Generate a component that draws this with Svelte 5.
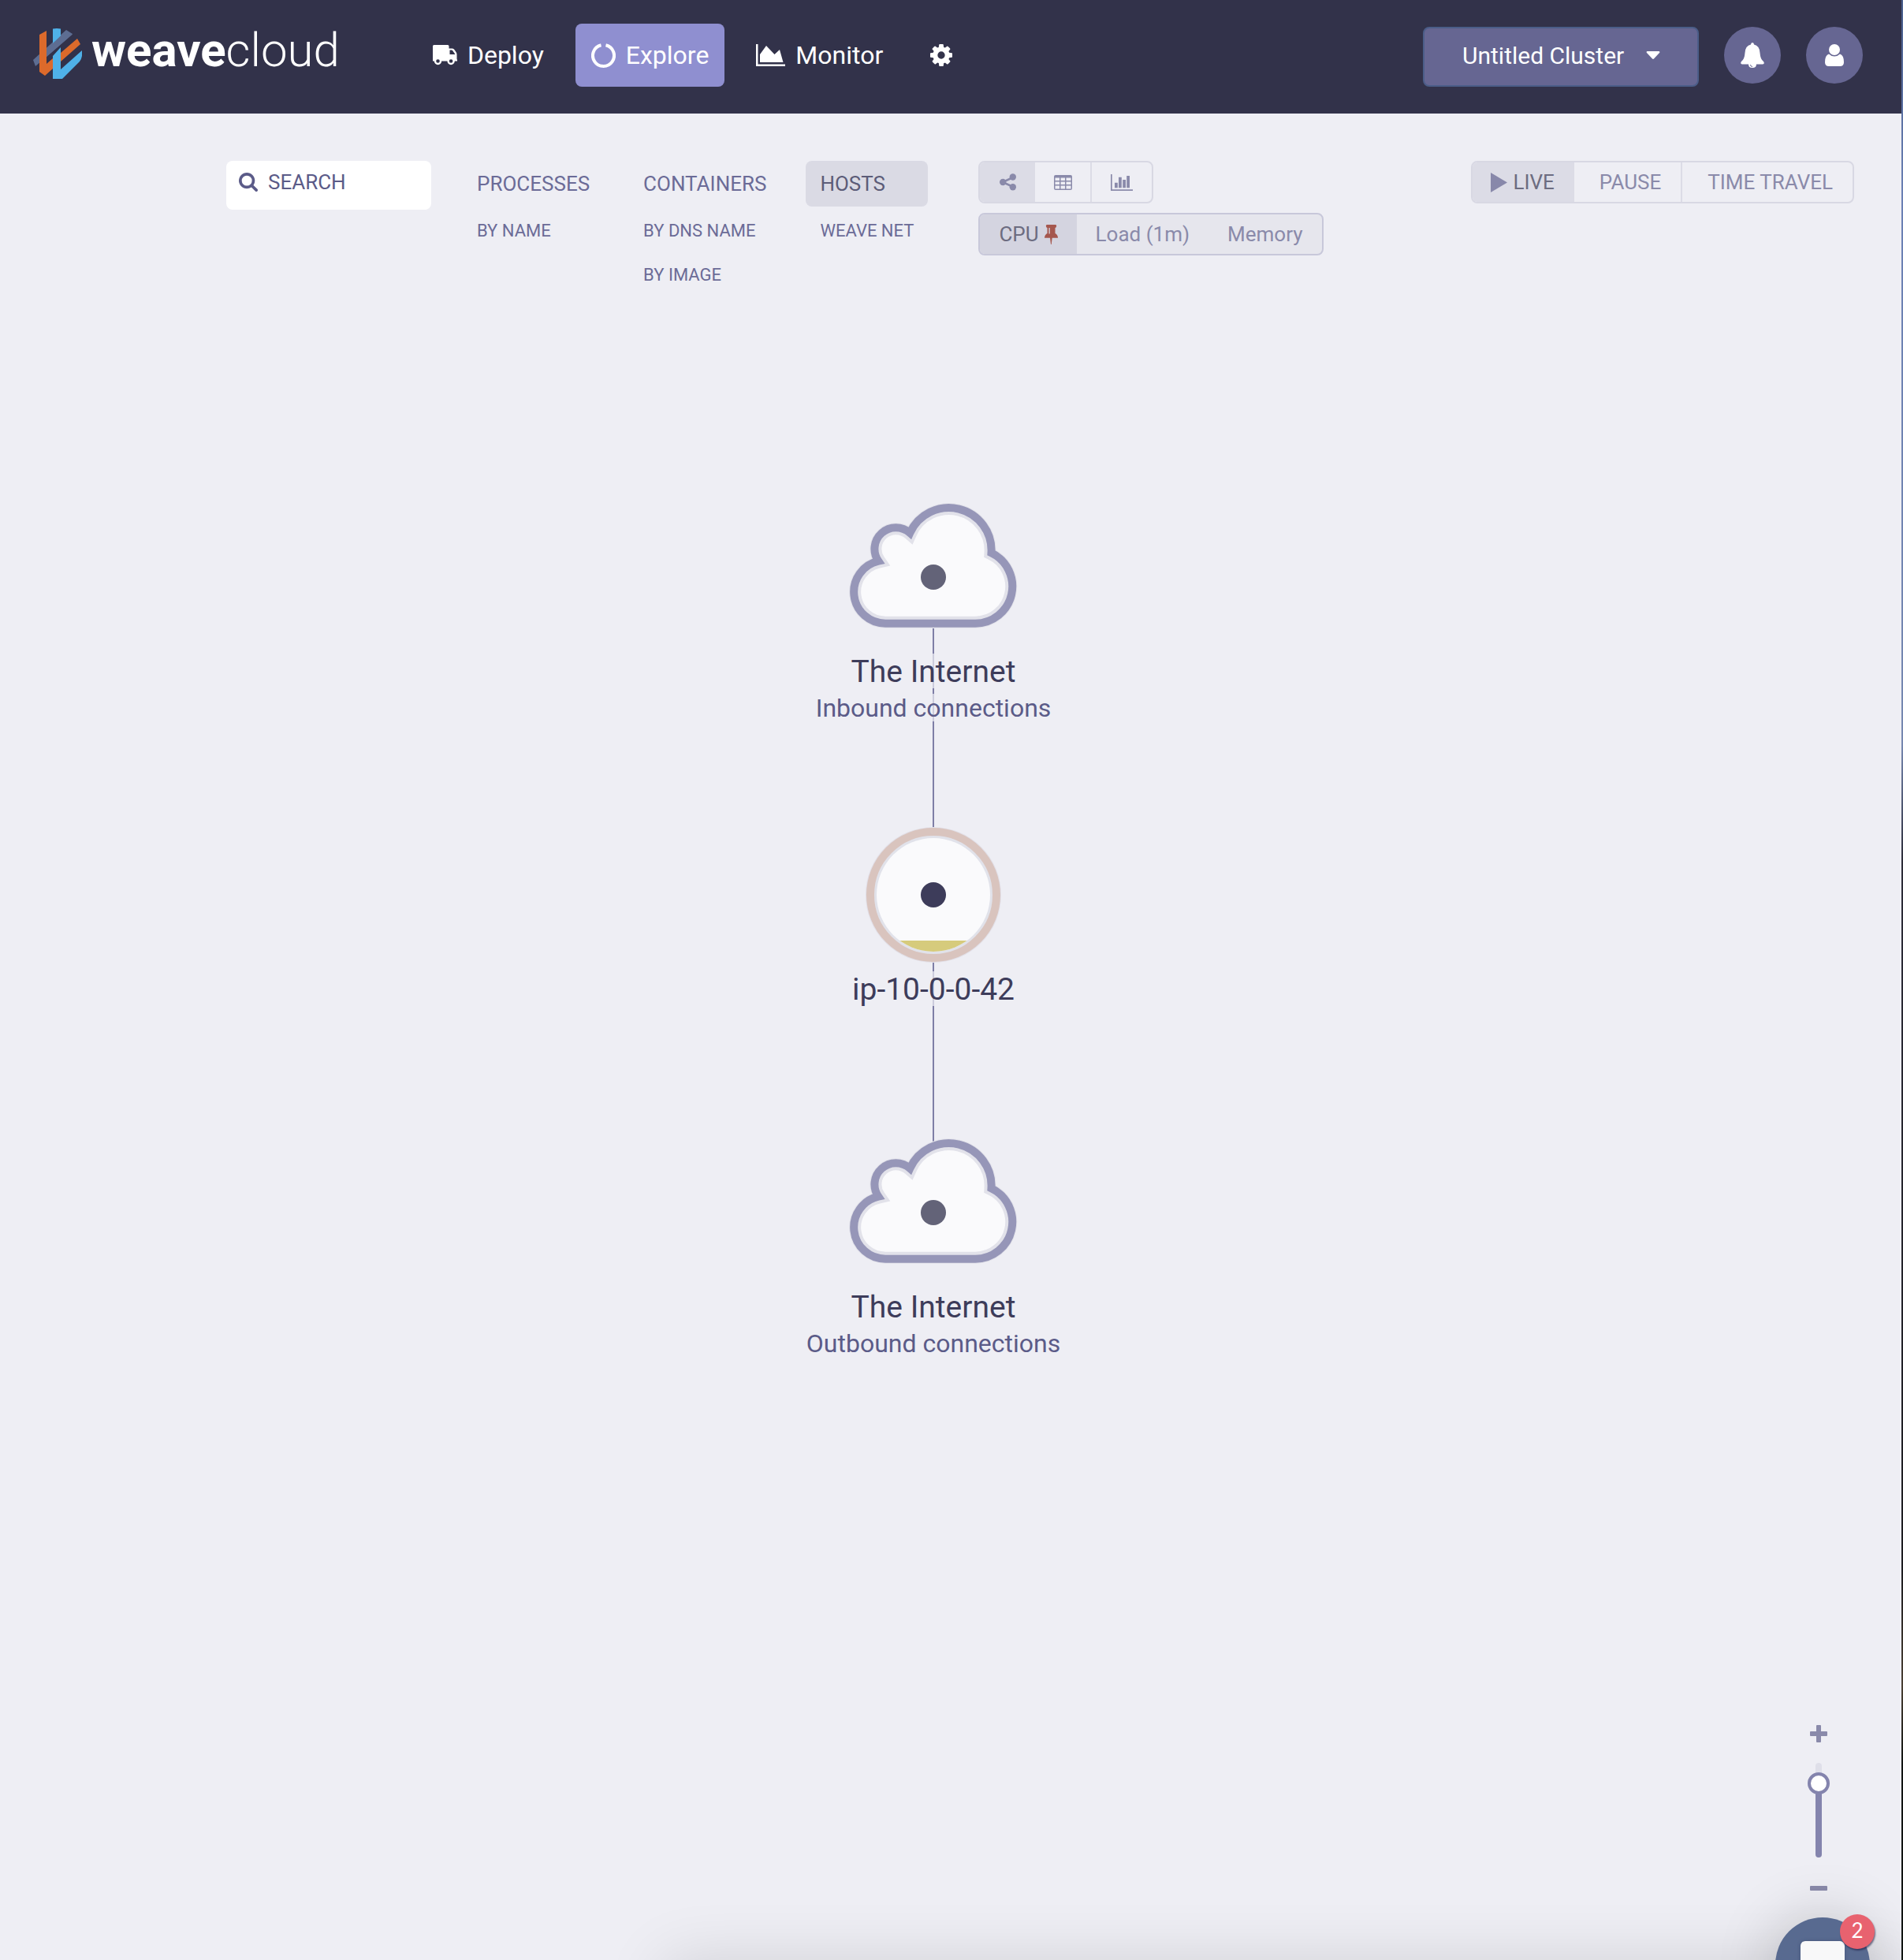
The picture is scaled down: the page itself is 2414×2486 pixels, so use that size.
<script>
  const navIcons = { deploy: 'Deploy', explore: 'Explore', monitor: 'Monitor' };
  let section = $state('explore');
  let topology = $state('Hosts');
  let view = $state('graph');
  let metric = $state('CPU');
  let timeMode = $state('live');
  let zoom = $state(87);

  const topologies = [
    { name: 'Processes', children: ['By name'] },
    { name: 'Containers', children: ['By DNS name', 'By image'] },
    { name: 'Hosts', children: ['Weave Net'] }
  ];
  const metrics = ['CPU', 'Load (1m)', 'Memory'];
  const cloud = 'M-60.700 58.700A40 40 0 0 1 -69.700 -20.300A27 27 0 0 1 -29.700 -56A54 54 0 0 1 73.500 -30.700A47 47 0 0 1 53.300 58.700Z';
</script>

<div class="app">
  <div class="page">
    <header>
      <a class="logo" href="#home" aria-label="weavecloud">
        <svg width="62" height="64" viewBox="42 36 62 64" aria-hidden="true">
          <path fill="#5d6d92" d="M84 38L92 43L45 84L42 76Z" />
          <path fill="#4fb1e8" d="M67 36.500Q72 35.500 77 36.500V46L67 55ZM67 71L77 60V88L104 64V71Q103 76 101 78L79 100H67Z" />
          <path fill="#5d6d92" d="M83.500 39L92 43.500L58 73L58 64Z" />
          <path fill="#dc6a2b" d="M50 44L59 39V81L67 74V87L57 96L50 91ZM77 67L98 49L102 56L77 78Z" />
        </svg>
        <span class="wordmark"><b>weave</b>cloud</span>
      </a>
      <nav aria-label="Main">
        {#each Object.entries(navIcons) as [id, label]}
          <a href={'#' + id} class:active={section === id} onclick={() => (section = id)}>
            {#if id === 'deploy'}
              <svg width="31" height="26" viewBox="0 0 31 26" aria-hidden="true">
                <path fill="currentColor" fill-rule="evenodd" d="M1.500 0H19Q20.500 0 20.500 1.500V4.500H24.500Q26 4.500 27 5.500L29.500 9Q30.500 10.500 30.500 12V18.500H31V20.500H27.800A4.700 4.700 0 1 1 18.400 20.500H11.200A4.700 4.700 0 1 1 1.800 20.500H0V1.500Q0 0 1.500 0ZM21.500 6.500V12H28.500L25 7Q24.500 6.500 24 6.500ZM6.500 18.200A2.300 2.300 0 1 0 6.500 22.800A2.300 2.300 0 1 0 6.500 18.200ZM23.100 18.200A2.300 2.300 0 1 0 23.100 22.800A2.300 2.300 0 1 0 23.100 18.200Z" />
              </svg>
            {:else if id === 'explore'}
              <svg width="31" height="31" viewBox="0 0 31 31" aria-hidden="true">
                <path fill="none" stroke="currentColor" stroke-width="4" d="M18.500 2.300A13.500 13.500 0 1 1 12.500 2.300" />
              </svg>
            {:else}
              <svg width="37" height="28" viewBox="0 0 37 28" aria-hidden="true">
                <path fill="currentColor" d="M0 0H2.500V25.500H37V28H0ZM5 23V13L13 2L23.500 13L30 7L34.500 23Z" />
              </svg>
            {/if}
            <span>{label}</span>
          </a>
        {/each}
        <a href="#settings" aria-label="Settings">
          <svg width="28" height="28" viewBox="128 128 1536 1536" aria-hidden="true">
            <path fill="currentColor" d="M1152 896q0-106-75-181t-181-75-181 75-75 181 75 181 181 75 181-75 75-181zm512-109v222q0 12-8 23t-20 13l-185 28q-19 54-39 91 35 50 107 138 10 12 10 25t-9 23q-27 37-99 108t-94 71q-12 0-26-9l-138-108q-44 23-91 38-16 136-29 186-7 28-36 28h-222q-14 0-24.500-8.500t-11.500-21.500l-28-184q-49-16-90-37l-141 107q-10 9-25 9-14 0-25-11-126-114-165-168-7-10-7-23 0-12 8-23 15-21 51-66.500t54-70.500q-27-50-41-99l-183-27q-13-2-21-12.500t-8-23.500v-222q0-12 8-23t19-13l186-28q14-46 39-92-40-57-107-138-10-12-10-24 0-10 9-23 26-36 98.500-107.500t94.500-71.500q13 0 26 10l138 107q44-23 91-38 16-136 29-186 7-28 36-28h222q14 0 24.500 8.500t11.500 21.500l28 184q49 16 90 37l142-107q9-9 24-9 13 0 25 10 129 119 165 170 7 8 7 22 0 12-8 23-15 21-51 66.500t-54 70.500q26 50 41 98l183 28q13 2 21 12.500t8 23.500z" />
          </svg>
        </a>
      </nav>
      <div class="account">
        <div class="cluster">
          <select aria-label="Cluster">
            <option>Untitled Cluster</option>
          </select>
          <svg width="18" height="10" viewBox="0 0 18 10" aria-hidden="true"><path fill="#fff" d="M1.500 0H16.500Q18 .5 17 2L10 9.500Q9 10.300 8 9.500L1 2Q0 .5 1.500 0Z" /></svg>
        </div>
        <button class="round" aria-label="Notifications">
          <svg width="30" height="32" viewBox="0 0 30 32" aria-hidden="true">
            <path fill="#fff" d="M15 0Q17 0 17 2.500Q24 4 24.500 13Q25 21 29 24Q31 27 28 27.500H2Q-1 27 1 24Q5 21 5.500 13Q6 4 13 2.500Q13 0 15 0ZM10 27.500H20Q20 32 15 32Q10 32 10 27.500Z" />
            <path fill="none" stroke="#666692" stroke-width="1" d="M12.500 28Q12.500 30.500 15 30.500" />
          </svg>
        </button>
        <button class="round" aria-label="Account">
          <svg width="24" height="28" viewBox="0 0 24 28" aria-hidden="true">
            <circle cx="12" cy="7" r="7" fill="#fff" />
            <path fill="#fff" d="M5 12.500Q8 15.500 12 15.500Q16 15.500 19 12.500Q24 14 24 23Q24 28 19 28H5Q0 28 0 23Q0 14 5 12.500Z" />
          </svg>
        </button>
      </div>
    </header>

    <main>
      <div class="toolbar">
        <label class="search">
          <svg width="24" height="24" viewBox="64 128 1664 1664" aria-hidden="true">
            <path fill="#5b5b88" d="M1216 832q0-185-131.500-316.500t-316.500-131.500-316.500 131.500-131.500 316.500 131.500 316.500 316.500 131.500 316.500-131.500 131.500-316.500zm512 832q0 52-38 90t-90 38q-54 0-90-38l-343-342q-179 124-399 124-143 0-273.500-55.500t-225-150-150-225-55.500-273.500 55.500-273.500 150-225 225-150 273.500-55.500 273.500 55.500 225 150 150 225 55.500 273.500q0 220-124 399l343 343q37 37 37 90z" />
          </svg>
          <input type="text" placeholder="SEARCH" aria-label="Search" />
        </label>

        <div class="topologies">
          {#each topologies as group}
            <div class="topology">
              <button class="primary" class:selected={topology === group.name} onclick={() => (topology = group.name)}>{group.name}</button>
              {#each group.children as child}
                <button class="sub" class:selected={topology === child} onclick={() => (topology = child)}>{child}</button>
              {/each}
            </div>
          {/each}
        </div>

        <div class="modes">
          <div class="group views">
            <button class:on={view === 'graph'} aria-label="Graph" onclick={() => (view = 'graph')}>
              <svg width="21" height="22" viewBox="0 0 21 22" aria-hidden="true">
                <path fill="none" stroke="currentColor" stroke-width="2.500" d="M17 5L4 11L17 17" />
                <g fill="currentColor"><circle cx="4.200" cy="11" r="4.200" /><circle cx="16.800" cy="4.500" r="4.200" /><circle cx="16.800" cy="17.200" r="4.200" /></g>
              </svg>
            </button>
            <button class:on={view === 'table'} aria-label="Table" onclick={() => (view = 'table')}>
              <svg width="23" height="19" viewBox="0 0 23 19" aria-hidden="true">
                <path fill="currentColor" fill-rule="evenodd" d="M2 0H21Q23 0 23 2V17Q23 19 21 19H2Q0 19 0 17V2Q0 0 2 0ZM1.500 3.500V7H7V3.500ZM8.500 3.500V7H14V3.500ZM15.500 3.500V7H21.500V3.500ZM1.500 8.500V12H7V8.500ZM8.500 8.500V12H14V8.500ZM15.500 8.500V12H21.500V8.500ZM1.500 13.500V17.500H7V13.500ZM8.500 13.500V17.500H14V13.500ZM15.500 13.500V17.500H21.500V13.500Z" />
              </svg>
            </button>
            <button class="wide" class:on={view === 'resources'} aria-label="Resources" onclick={() => (view = 'resources')}>
              <svg width="28" height="21" viewBox="0 0 28 21" aria-hidden="true">
                <path fill="currentColor" d="M0 0H1.700V19.300H28V21H0ZM5 10.700H8.800V17.300H5ZM10 3.700H13.800V17.300H10ZM15.200 7H19V17.300H15.200ZM20.200 2H24V17.300H20.200Z" />
              </svg>
            </button>
          </div>
          <div class="group metrics">
            {#each metrics as m}
              <button class:on={metric === m} onclick={() => (metric = m)}>
                {m}
                {#if metric === m}
                  <svg width="17" height="25" viewBox="0 0 17 25" aria-hidden="true">
                    <path fill="#a5574e" fill-rule="evenodd" d="M2.500 0H14.500Q16 1.700 14.500 3.500L13.500 4V11Q17 13 17 16.800H9.700L8.700 25H8L7 16.800H0Q0 13 3.500 11V4L2.500 3.500Q1 1.700 2.500 0ZM5.500 4V11.500H6.800V4Z" />
                  </svg>
                {/if}
              </button>
            {/each}
          </div>
        </div>

        <div class="group time">
          <button class:on={timeMode === 'live'} onclick={() => (timeMode = 'live')}>
            <svg width="21" height="25" viewBox="0 0 21 25" aria-hidden="true"><path fill="#8888aa" d="M0 0L21 12.500L0 25Z" /></svg>
            LIVE
          </button>
          <button class:on={timeMode === 'pause'} onclick={() => (timeMode = 'pause')}>PAUSE</button>
          <button class:on={timeMode === 'travel'} onclick={() => (timeMode = 'travel')}>TIME TRAVEL</button>
        </div>
      </div>

      <div class="canvas">
        <svg width="360" height="1100" viewBox="-180 -100 360 1100" role="img" aria-label="Hosts graph">
          <defs>
            <clipPath id="cloud-inner"><path d={cloud} /></clipPath>
            <clipPath id="host-inner"><circle r="72" /></clipPath>
          </defs>
          <path class="edge" d="M0 65V403M0 403V806" />
          {#each [{ y: 0, sub: 'Inbound connections' }, { y: 806, sub: 'Outbound connections' }] as node}
            <g transform={`translate(0 ${node.y})`}>
              <path class="halo" d={cloud} />
              <path d={cloud} fill="#fafafc" />
              <path d={cloud} clip-path="url(#cloud-inner)" fill="none" stroke="#e2e2ea" stroke-width="18" />
              <path d={cloud} fill="none" stroke="#9696b8" stroke-width="10" />
              <circle r="16" fill="#636378" />
              <rect class="plate" x="-108" y="97" width="216" height="44" />
              <rect class="plate" x="-166" y="148" width="332" height="35" />
              <text class="title" y="133">The Internet</text>
              <text class="subtitle" y="177">{node.sub}</text>
            </g>
          {/each}
          <g transform="translate(0 403)">
            <circle r="86" fill="#e2e0e8" />
            <circle r="80" fill="#e1e2ea" stroke="#d9c4be" stroke-width="10" />
            <circle r="72" fill="#fafafc" />
            <rect x="-72" y="58" width="144" height="14" fill="#d6cb7c" clip-path="url(#host-inner)" />
            <circle r="16" fill="#3d3c5a" />
            <rect class="plate" x="-106" y="97" width="212" height="44" />
            <text class="title" y="133">ip-10-0-0-42</text>
          </g>
        </svg>
      </div>

      <div class="zoom">
        <button aria-label="Zoom in" onclick={() => (zoom = Math.min(100, zoom + 5))}>
          <svg width="22" height="22" viewBox="0 0 22 22" aria-hidden="true"><path fill="currentColor" d="M9 0H13Q14 0 14 1V8H21Q22 8 22 9V13Q22 14 21 14H14V21Q14 22 13 22H9Q8 22 8 21V14H1Q0 14 0 13V9Q0 8 1 8H8V1Q8 0 9 0Z" /></svg>
        </button>
        <input type="range" min="0" max="100" bind:value={zoom} aria-label="Zoom level" style={`--level: ${zoom}%`} />
        <button aria-label="Zoom out" onclick={() => (zoom = Math.max(0, zoom - 5))}>
          <svg width="22" height="6" viewBox="0 0 22 6" aria-hidden="true"><rect width="22" height="6" rx="1" fill="currentColor" /></svg>
        </button>
      </div>
      <div class="drawer-shadow"></div>
      <button class="chat" aria-label="Open chat">
        <span class="bubble"></span>
        <span class="badge">2</span>
      </button>
    </main>
  </div>
  <div class="edge-strip"></div>
</div>

<style>
  :global(body) {
    background: #eeeef4;
  }
  .app {
    display: grid;
    grid-template-columns: 1fr 2px;
    min-height: 100vh;
    font-family: Roboto, 'Liberation Sans', sans-serif;
    font-size: 26px;
    overflow: hidden;
  }
  .page {
    display: flex;
    flex-direction: column;
  }
  .edge-strip {
    background: linear-gradient(#4a5f8c, #6a80b4 10%, #7688b0 38%, #2c2c38 44%, #1c1c20 80%, #4a4034 86%, #101412 90%);
  }
  button,
  input,
  select {
    font: inherit;
    color: inherit;
    border: 0;
    margin: 0;
    padding: 0;
    background: none;
  }
  button {
    cursor: pointer;
  }
  svg {
    display: block;
    flex: none;
  }
  header {
    display: flex;
    align-items: center;
    height: 144px;
    padding: 0 49px 0 42px;
    box-sizing: border-box;
    background: #32324a;
    color: #fff;
  }
  .logo {
    display: flex;
    align-items: center;
    gap: 12px;
    color: inherit;
    text-decoration: none;
    padding-bottom: 8px;
  }
  .wordmark {
    font-size: 60px;
    line-height: 72px;
    font-weight: 300;
    padding-bottom: 8px;
  }
  .wordmark b {
    font-weight: 700;
  }
  nav {
    display: flex;
    gap: 20px;
    margin-left: 98px;
    padding-bottom: 4px;
  }
  nav a {
    display: flex;
    align-items: center;
    gap: 13px;
    height: 80px;
    padding: 0 20px;
    border-radius: 8px;
    color: #fff;
    text-decoration: none;
    font-size: 32px;
    white-space: nowrap;
  }
  nav a.active {
    background: #8f8fd0;
  }
  .account {
    display: flex;
    align-items: center;
    gap: 32px;
    margin-left: auto;
  }
  .cluster {
    display: grid;
    align-items: center;
    width: 350px;
    height: 76px;
  }
  .cluster > * {
    grid-area: 1 / 1;
  }
  .cluster select {
    appearance: none;
    width: 100%;
    height: 76px;
    box-sizing: border-box;
    padding: 0 48px 4px;
    border: 2px solid #4b5d88;
    border-radius: 8px;
    background: #666692;
    color: #fff;
    font-size: 30px;
  }
  .cluster svg {
    justify-self: end;
    margin: 0 49px 4px 0;
    pointer-events: none;
  }
  .round {
    display: grid;
    place-items: center;
    width: 72px;
    height: 72px;
    margin-bottom: 4px;
    border-radius: 50%;
    background: #666692;
  }
  main {
    position: relative;
    flex: 1;
    overflow: hidden;
  }
  .toolbar {
    display: flex;
    align-items: flex-start;
    padding: 60px 60px 0 287px;
  }
  .search {
    display: flex;
    align-items: center;
    gap: 13px;
    width: 260px;
    height: 62px;
    box-sizing: border-box;
    padding: 0 16px 8px;
    border-radius: 8px;
    background: #fff;
    color: #5b5b88;
  }
  .search input {
    min-width: 0;
    flex: 1;
    outline: 0;
  }
  .search input::placeholder {
    color: #5b5b88;
    opacity: 1;
  }
  .topologies {
    display: flex;
    gap: 32px;
    margin-left: 40px;
  }
  .topology {
    display: flex;
    flex-direction: column;
    color: #6b6b97;
  }
  .topology button {
    text-align: left;
    text-transform: uppercase;
    padding: 0 18px;
    border-radius: 8px;
    white-space: nowrap;
  }
  .primary {
    height: 58px;
    margin-bottom: 2px;
  }
  .sub {
    height: 56px;
    font-size: 22px;
  }
  .topology .selected {
    background: #dadae4;
    color: #5c5c78;
  }
  .modes {
    display: flex;
    flex-direction: column;
    align-items: flex-start;
    gap: 12px;
    margin-left: 64px;
  }
  .group {
    display: flex;
    height: 54px;
    box-sizing: border-box;
    border: 2px solid #d8d8e3;
    border-radius: 8px;
    overflow: hidden;
    color: #8a8aaa;
  }
  .group button {
    display: flex;
    align-items: center;
    justify-content: center;
    gap: 7px;
    white-space: nowrap;
  }
  .group .on {
    background: #dcdce6;
    color: #6c6c80;
  }
  .views button {
    width: 70px;
  }
  .views .on {
    color: #8a8aaa;
  }
  .views button:not(:first-child):not(:last-child) {
    border-right: 2px solid #dcdce6;
    width: 72px;
  }
  .views .wide {
    width: 76px;
  }
  .metrics {
    border-color: #c8c8da;
    background: #e6e6ed;
  }
  .metrics button {
    padding: 0 24px;
  }
  .metrics .on {
    background: #d4d4e0;
  }
  .time {
    margin-left: auto;
  }
  .time button {
    padding: 0 25px 0 32px;
  }
  .time button:first-child {
    padding-left: 23px;
  }
  .time button:nth-child(2) {
    border-right: 2px solid #dcdce6;
  }
  .canvas {
    display: flex;
    justify-content: center;
    padding: 256px 44px 0 0;
  }
  .canvas svg {
    overflow: visible;
  }
  .edge {
    stroke: #7e7ea6;
    stroke-width: 2;
    fill: none;
  }
  .halo {
    fill: none;
    stroke: #e2e2ea;
    stroke-width: 12;
  }
  .plate {
    fill: #eeeef4;
    opacity: 0.7;
  }
  .title,
  .subtitle {
    text-anchor: middle;
    font-size: 39px;
    fill: #3d3c5a;
  }
  .subtitle {
    font-size: 32px;
    fill: #5b5b88;
  }
  .zoom {
    position: absolute;
    right: 91px;
    bottom: 88px;
    display: flex;
    flex-direction: column;
    align-items: center;
    color: #8a8aaa;
  }
  .zoom input {
    appearance: none;
    writing-mode: vertical-lr;
    direction: rtl;
    width: 28px;
    height: 120px;
    margin: 26px 0 36px;
  }
  .zoom input::-webkit-slider-runnable-track {
    width: 8px;
    height: 120px;
    border-radius: 4px;
    background: linear-gradient(to top, #8484ad var(--level), #dfdfe9 var(--level));
  }
  .zoom input::-webkit-slider-thumb {
    appearance: none;
    width: 28px;
    height: 28px;
    margin-left: -10px;
    box-sizing: border-box;
    border: 4px solid #8484ad;
    border-radius: 50%;
    background: #fff;
  }
  .drawer-shadow {
    position: absolute;
    left: 843px;
    right: 0;
    top: 100%;
    height: 200px;
    box-shadow: 0 0 80px rgba(0, 0, 0, 0.12);
    pointer-events: none;
  }
  .chat {
    position: absolute;
    right: 40px;
    bottom: -66px;
    width: 120px;
    height: 120px;
    border-radius: 50%;
    background: #586a90;
    box-shadow: 0 2px 80px rgba(0, 0, 0, 0.2);
  }
  .bubble {
    position: absolute;
    left: 32px;
    top: 30px;
    width: 56px;
    height: 56px;
    border-radius: 6px;
    background: #f8f8f9;
    box-shadow: 0 0 4px rgba(40, 50, 90, 0.4);
  }
  .badge {
    position: absolute;
    top: -4px;
    right: -6px;
    width: 44px;
    height: 44px;
    border-radius: 50%;
    background: #e8626f;
    color: #fff;
    font: 26px/40px Lato, sans-serif;
    text-align: center;
    box-shadow: 1px 2px 2px rgba(30, 30, 70, 0.6);
  }
</style>
